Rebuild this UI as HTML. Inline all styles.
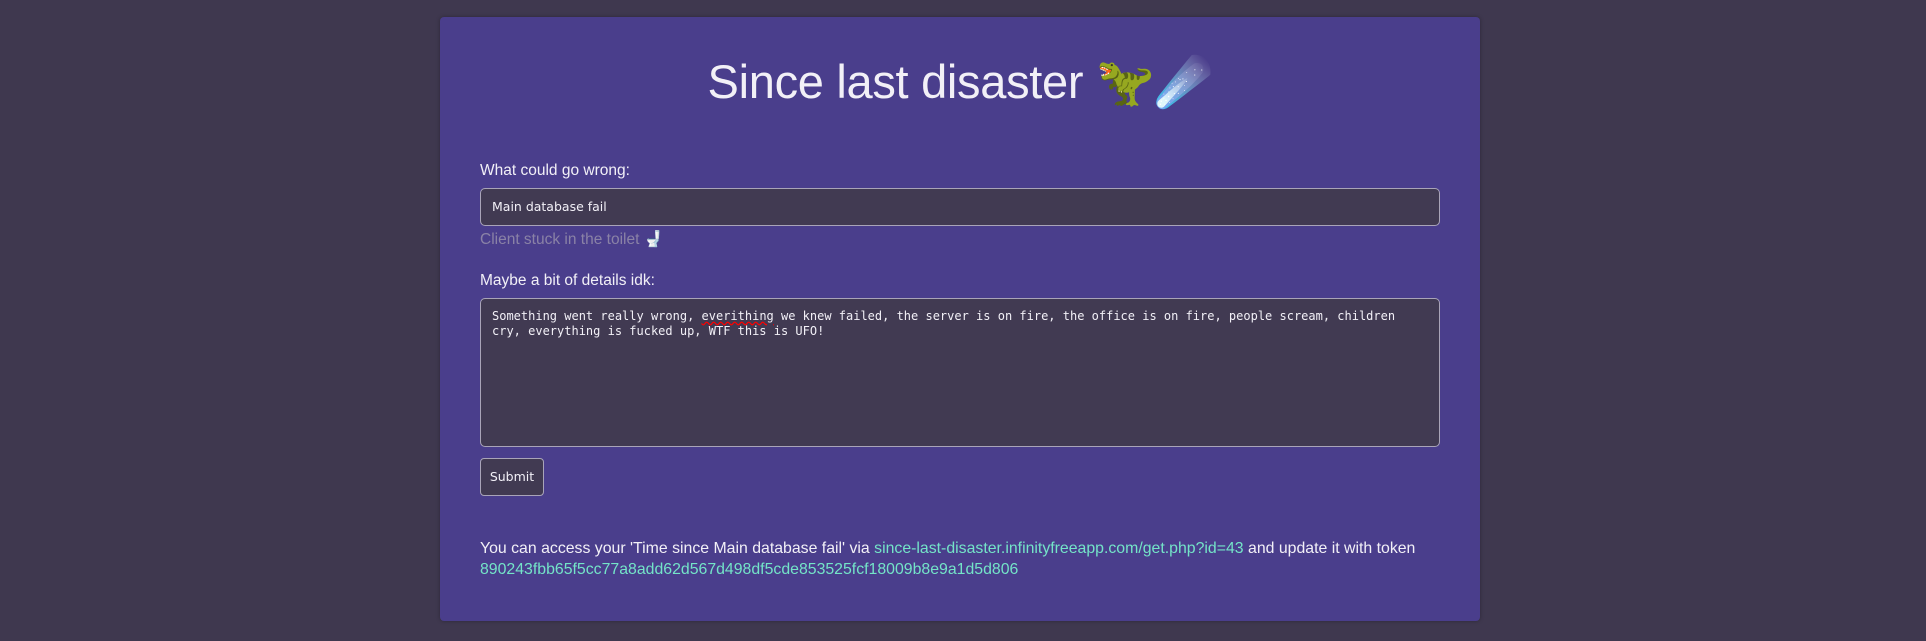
<!DOCTYPE html>
<html><head><meta charset="utf-8"><style>
html,body{margin:0;padding:0;width:1926px;height:641px;background:#3f384f;overflow:hidden}
body{font-family:"Liberation Sans",sans-serif;color:#f2f0f7}
.card{position:absolute;left:440px;top:17px;width:1040px;height:604px;background:#4a3e8c;border-radius:4px;box-shadow:0 0 4px rgba(0,0,0,.3)}
h1{position:absolute;left:0;width:100%;top:37px;margin:0;text-align:center;font-weight:normal;font-size:47px;letter-spacing:-0.3px;line-height:56px}
.lbl{position:absolute;left:40px;font-size:15.5px}
.inp{position:absolute;left:40px;width:960px;background:#413a52;border:1px solid #a9a4b8;border-radius:5px;box-sizing:border-box}
.inp1{top:171px;height:38px;font-family:"DejaVu Sans",sans-serif;font-size:12.5px;padding:10px 11px}
.inp2{top:281px;height:149px;font-family:"DejaVu Sans Mono","Liberation Mono",monospace;font-size:12px;line-height:15px;padding:10px 11px;white-space:pre}
.hint{position:absolute;left:40px;top:213px;font-size:15.5px;color:#8a82a6}
.btn{position:absolute;left:40px;top:441px;width:64px;height:38px;box-sizing:border-box;background:#413a52;border:1px solid #a9a4b8;border-radius:4px;font-family:"DejaVu Sans",sans-serif;font-size:12.5px;text-align:center;line-height:36px}
.foot{position:absolute;left:40px;top:521px;font-size:15.85px;line-height:21px;width:990px}
.foot a{color:#74e4c8;text-decoration:none}
u{text-decoration:underline wavy red}
</style></head><body>
<div class="card">
<h1>Since last disaster 🦖☄️</h1>
<div class="lbl" style="top:145px">What could go wrong:</div>
<div class="inp inp1">Main database fail</div>
<div class="hint">Client stuck in the toilet 🚽</div>
<div class="lbl" style="top:255px">Maybe a bit of details idk:</div>
<div class="inp inp2">Something went really wrong, <u>everithing</u> we knew failed, the server is on fire, the office is on fire, people scream, children
cry, everything is fucked up, WTF this is UFO!</div>
<div class="btn">Submit</div>
<div class="foot">You can access your 'Time since Main database fail' via <a>since-last-disaster.infinityfreeapp.com/get.php?id=43</a> and update it with token<br><a>890243fbb65f5cc77a8add62d567d498df5cde853525fcf18009b8e9a1d5d806</a></div>
</div>
</body></html>
